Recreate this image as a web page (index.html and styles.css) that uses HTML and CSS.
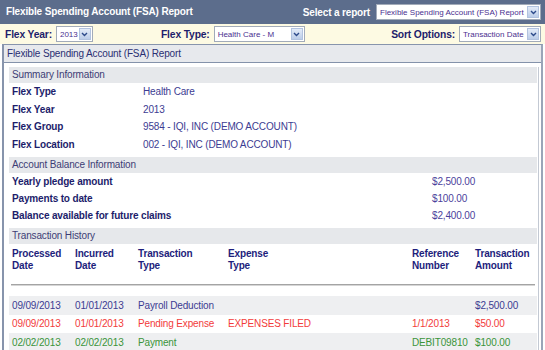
FILE: index.html
```html
<!DOCTYPE html>
<html lang="en">
<head>
    <meta charset="UTF-8">
    <meta name="viewport" content="width=device-width, initial-scale=1.0">
    <title>Flexible Spending Account (FSA) Report</title>
    <link rel="stylesheet" href="styles.css">
</head>
<body>

    <!-- Top bar -->
    <div class="topbar">
        <span class="topbar-title">Flexible Spending Account (FSA) Report</span>
        <div class="report-pick">
            <span class="pick-label">Select a report</span>
            <span class="select select-report">
                <span class="select-text">Flexible Spending Account (FSA) Report</span>
                <span class="select-btn"><svg width="7" height="5" viewBox="0 0 7 5"><path d="M1 1 L3.5 3.5 L6 1" fill="none" stroke="#2d4a8a" stroke-width="1.4"/></svg></span>
            </span>
        </div>
    </div>

    <!-- Filters -->
    <div class="filters">
        <div class="filter">
            <span class="filter-label">Flex Year:</span>
            <span class="select select-year">
                <span class="select-text">2013</span>
                <span class="select-btn"><svg width="7" height="5" viewBox="0 0 7 5"><path d="M1 1 L3.5 3.5 L6 1" fill="none" stroke="#2d4a8a" stroke-width="1.4"/></svg></span>
            </span>
        </div>
        <div class="filter filter-type">
            <span class="filter-label">Flex Type:</span>
            <span class="select select-type">
                <span class="select-text">Health Care - M</span>
                <span class="select-btn"><svg width="7" height="5" viewBox="0 0 7 5"><path d="M1 1 L3.5 3.5 L6 1" fill="none" stroke="#2d4a8a" stroke-width="1.4"/></svg></span>
            </span>
        </div>
        <div class="filter filter-sort">
            <span class="filter-label">Sort Options:</span>
            <span class="select select-sort">
                <span class="select-text">Transaction Date</span>
                <span class="select-btn"><svg width="7" height="5" viewBox="0 0 7 5"><path d="M1 1 L3.5 3.5 L6 1" fill="none" stroke="#2d4a8a" stroke-width="1.4"/></svg></span>
            </span>
        </div>
    </div>

    <!-- Report -->
    <div class="panel">
        <div class="panel-title">Flexible Spending Account (FSA) Report</div>
        <div class="panel-body">

            <div class="section">Summary Information</div>
            <div class="info-row summary-row"><span class="label">Flex Type</span><span class="value">Health Care</span></div>
            <div class="info-row summary-row"><span class="label">Flex Year</span><span class="value">2013</span></div>
            <div class="info-row summary-row"><span class="label">Flex Group</span><span class="value">9584 - IQI, INC (DEMO ACCOUNT)</span></div>
            <div class="info-row summary-row"><span class="label">Flex Location</span><span class="value">002 - IQI, INC (DEMO ACCOUNT)</span></div>

            <div class="section">Account Balance Information</div>
            <div class="info-row balance-row"><span class="label">Yearly pledge amount</span><span class="value">$2,500.00</span></div>
            <div class="info-row balance-row"><span class="label">Payments to date</span><span class="value">$100.00</span></div>
            <div class="info-row balance-row"><span class="label">Balance available for future claims</span><span class="value">$2,400.00</span></div>

            <div class="section">Transaction History</div>
            <table class="history">
                <colgroup>
                    <col style="width:63px">
                    <col style="width:63px">
                    <col style="width:90px">
                    <col style="width:184px">
                    <col style="width:63px">
                    <col>
                </colgroup>
                <thead>
                    <tr>
                        <th>Processed<br>Date</th>
                        <th>Incurred<br>Date</th>
                        <th>Transaction<br>Type</th>
                        <th>Expense<br>Type</th>
                        <th>Reference<br>Number</th>
                        <th>Transaction<br>Amount</th>
                    </tr>
                </thead>
                <tbody>
                    <tr class="rule-row"><td colspan="6"><div class="rule"></div></td></tr>
                    <tr class="tx tx-payroll">
                        <td>09/09/2013</td><td>01/01/2013</td><td>Payroll Deduction</td><td></td><td></td><td>$2,500.00</td>
                    </tr>
                    <tr class="tx tx-pending">
                        <td>09/09/2013</td><td>01/01/2013</td><td>Pending Expense</td><td>EXPENSES FILED</td><td>1/1/2013</td><td>$50.00</td>
                    </tr>
                    <tr class="tx tx-payment">
                        <td>02/02/2013</td><td>02/02/2013</td><td>Payment</td><td></td><td>DEBIT09810</td><td>$100.00</td>
                    </tr>
                </tbody>
            </table>

        </div>
    </div>

</body>
</html>
```

FILE: styles.css
```css
body {
    margin: 0;
    font-family: "Liberation Sans", Arial, sans-serif;
    font-size: 10px;
    letter-spacing: -0.15px;
    color: #1d1d6b;
    background: #fff;
    width: 545px;
    height: 350px;
    overflow: hidden;
}

/* Top bar */
.topbar {
    height: 24px;
    background: #5c6d8c;
    display: flex;
    align-items: center;
    justify-content: space-between;
    padding: 0 4px 0 6px;
}

.topbar-title {
    color: #fff;
    font-weight: bold;
    margin-top: -2px;
}

.report-pick {
    display: flex;
    align-items: center;
    gap: 6px;
}

.pick-label {
    color: #fff;
    font-weight: bold;
}

/* Fake dropdowns */
.select {
    display: flex;
    align-items: center;
    height: 16px;
    box-sizing: border-box;
    background: #fff;
    border: 1px solid #a2abb9;
}

.select-text {
    flex: 1;
    font-size: 8px;
    letter-spacing: 0;
    color: #4a2f8f;
    padding-left: 3px;
    white-space: nowrap;
    overflow: hidden;
}

.select-btn {
    width: 12px;
    height: 12px;
    margin-right: 1px;
    box-sizing: border-box;
    border: 1px solid #b2c3df;
    background: linear-gradient(#e3ebf8, #bccde9);
    display: flex;
    align-items: center;
    justify-content: center;
}

.select-report { width: 165px; }
.select-year { width: 37px; }
.select-type { width: 91px; }
.select-sort { width: 82px; }

/* Filters */
.filters {
    height: 20px;
    background: #fdfae3;
    display: flex;
    align-items: center;
    padding: 0 4px 0 5px;
}

.filter {
    display: flex;
    align-items: center;
    gap: 4px;
}

.filter-label {
    font-weight: bold;
    color: #1d1d6b;
    font-size: 10.3px;
}

.filter-type {
    margin-left: 68px;
}

.filter-sort {
    margin-left: auto;
}

/* Report panel */
.panel {
    margin: 0 2px;
    border: 1px solid #8794ac;
    border-left-width: 2px;
    border-right: 2px solid #9aa5b8;
    border-bottom: none;
    height: 305px;
    overflow: hidden;
}

.panel-title {
    height: 17px;
    line-height: 17px;
    background: #e7e9ed;
    border-bottom: 1px solid #8492aa;
    padding-left: 3px;
    color: #2a2f72;
}

.panel-body {
    margin-right: 2px;
    border-right: 1px solid #c3c9d3;
    padding: 0 1px 0 5px;
    height: 100%;
}

.section {
    margin-top: 4px;
    height: 16px;
    line-height: 16px;
    background: #e6e8eb;
    padding-left: 3px;
    color: #3d3d75;
}

.info-row {
    display: flex;
    align-items: center;
    padding-left: 3px;
}

.summary-row { height: 17.5px; }
.balance-row { height: 17px; }

.label {
    font-weight: bold;
    color: #1d1d6b;
}

.summary-row .label { width: 131px; }
.balance-row .label { width: 420px; }

.value {
    color: #3c3c92;
}

.balance-row .value {
    color: #4b3f9c;
}

/* Transaction history */
.history {
    width: 100%;
    table-layout: fixed;
    border-collapse: collapse;
}

.history th {
    text-align: left;
    vertical-align: top;
    font-weight: bold;
    color: #1e1e7c;
    line-height: 12px;
    padding: 4px 0 12px 3px;
}

.rule-row td {
    padding: 0 2px 10px 2px;
}

.rule {
    height: 1px;
    background: #a4a4a4;
    border-bottom: 1px solid #d6d6d6;
}

.tx td {
    height: 18.5px;
    padding: 0 0 0 3px;
    white-space: nowrap;
}

.tx-payroll { background: #eeeff1; color: #3c3c92; }
.tx-pending { background: #fff; color: #f23b3b; }
.tx-payment { background: #eeeff1; color: #3a943a; }
```
